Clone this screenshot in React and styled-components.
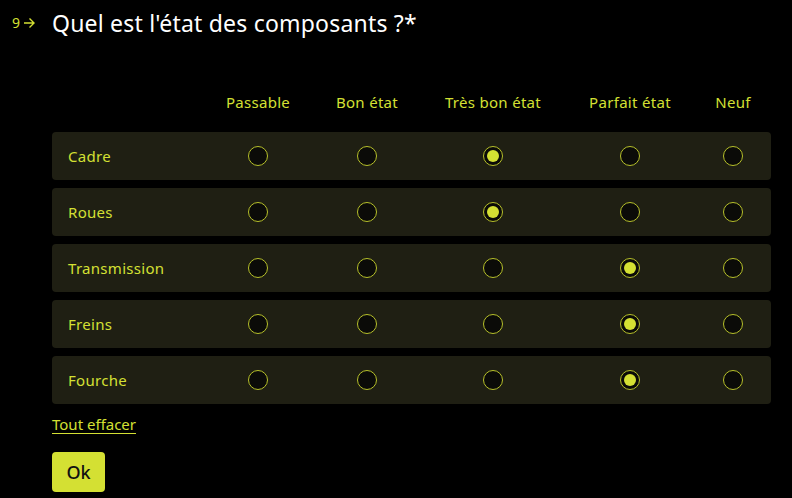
import styled, { createGlobalStyle } from "styled-components";

const Global = createGlobalStyle`
  html, body { margin: 0; padding: 0; background: #000; }
  body { font-family: "Noto Sans", "Open Sans", sans-serif; }
`;

const cols = ["Passable", "Bon état", "Très bon état", "Parfait état", "Neuf"];
const rows = [
  { label: "Cadre", value: 2 },
  { label: "Roues", value: 2 },
  { label: "Transmission", value: 3 },
  { label: "Freins", value: 3 },
  { label: "Fourche", value: 3 },
];

const Page = styled.div`
  width: 792px;
  height: 498px;
  overflow: hidden;
  background: #000;
  padding: 5px 0 0 12px;
  box-sizing: border-box;
`;

const Title = styled.div`
  display: flex;
  align-items: center;
  color: #fff;
  font-size: 23px;
  letter-spacing: 0.2px;
  line-height: 36px;
`;

const Num = styled.span`
  display: flex;
  align-items: center;
  gap: 3px;
  width: 40px;
  color: #d4e033;
  font-size: 14px;
  letter-spacing: 0;
`;

const Table = styled.div`
  margin: 48px 0 0 40px;
  width: 719px;
  display: flex;
  flex-direction: column;
  gap: 8px;
`;

const Grid = styled.div`
  display: grid;
  grid-template-columns: 1fr 110px 108px 144px 130px 76px;
  align-items: center;
`;

const Head = styled(Grid)`
  height: 26px;
  margin-bottom: 9px;
  color: #d4e033;
  font-size: 15px;
  letter-spacing: 0.3px;
`;

const HeadCell = styled.div`
  text-align: center;
`;

const Row = styled(Grid)`
  height: 48px;
  background: #1f1f13;
  border-radius: 4px;
  padding-left: 16px;
  color: #d4e033;
  font-size: 15px;
  letter-spacing: 0.3px;
`;

const Cell = styled.div`
  display: flex;
  justify-content: center;
`;

const Radio = styled.span`
  width: 20px;
  height: 20px;
  box-sizing: border-box;
  border-radius: 50%;
  border: 1px solid #b6c02a;
  background: #0b0b08;
  display: flex;
  align-items: center;
  justify-content: center;
  &::after {
    content: "";
    width: 12px;
    height: 12px;
    border-radius: 50%;
    background: ${(p) => (p.$on ? "#d4e033" : "transparent")};
  }
`;

const Clear = styled.div`
  margin: 10px 0 0 40px;
  color: #d4e033;
  font-size: 15px;
  text-decoration: underline;
  text-underline-offset: 3px;
  line-height: 20px;
`;

const Ok = styled.button`
  margin: 18px 0 0 40px;
  width: 53px;
  height: 40px;
  border: none;
  border-radius: 4px;
  background: #d4e033;
  color: #111;
  font-family: inherit;
  font-size: 18px;
  font-weight: 500;
  padding: 0;
`;

export default function App() {
  return (
    <Page>
      <Global />
      <Title>
        <Num>
          9
          <svg width="12" height="12" viewBox="0 0 12 12" fill="none" stroke="#d4e033" strokeWidth="1.4">
            <path d="M1 6h10M6.5 1.5 11 6l-4.5 4.5" />
          </svg>
        </Num>
        Quel est l'état des composants ?*
      </Title>
      <Table>
        <Head>
          <div />
          {cols.map((c) => (
            <HeadCell key={c}>{c}</HeadCell>
          ))}
        </Head>
        {rows.map((r) => (
          <Row key={r.label}>
            <div>{r.label}</div>
            {cols.map((c, i) => (
              <Cell key={c}>
                <Radio $on={i === r.value} />
              </Cell>
            ))}
          </Row>
        ))}
      </Table>
      <Clear>Tout effacer</Clear>
      <Ok>Ok</Ok>
    </Page>
  );
}
